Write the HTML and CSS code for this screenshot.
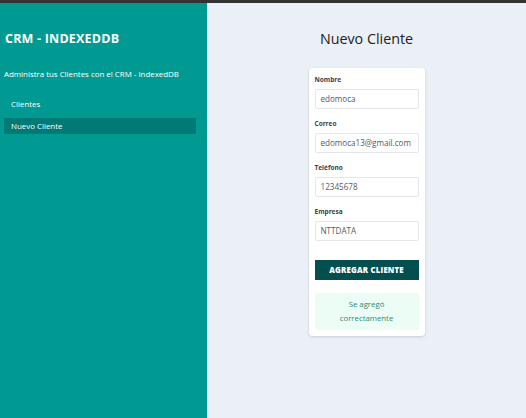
FILE: index.html
```html
<!DOCTYPE html>
<html lang="es">
<head>
<meta charset="utf-8">
<title>CRM - IndexedDB</title>
<link rel="stylesheet" href="styles.css">
</head>
<body>
<div class="topbar"></div>
<div class="layout">
  <aside class="sidebar">
    <h1 class="brand">CRM - INDEXEDDB</h1>
    <p class="tagline">Administra tus Clientes con el CRM - IndexedDB</p>
    <nav class="nav">
      <a class="nav-item">Clientes</a>
      <a class="nav-item active">Nuevo Cliente</a>
    </nav>
  </aside>
  <main class="main">
    <h2 class="page-title">Nuevo Cliente</h2>
    <form class="card">
      <div class="field">
        <label class="label">Nombre</label>
        <div class="input">edomoca</div>
      </div>
      <div class="field">
        <label class="label">Correo</label>
        <div class="input">edomoca13@gmail.com</div>
      </div>
      <div class="field">
        <label class="label">Teléfono</label>
        <div class="input">12345678</div>
      </div>
      <div class="field">
        <label class="label">Empresa</label>
        <div class="input">NTTDATA</div>
      </div>
      <button class="btn" type="button">AGREGAR CLIENTE</button>
      <div class="alert">Se agregó<br>correctamente</div>
    </form>
  </main>
</div>
</body>
</html>
```

FILE: styles.css
```css
* { box-sizing: border-box; }
html, body { margin: 0; padding: 0; height: 100%; }
body {
  font-family: "Open Sans", "Noto Sans", sans-serif;
  background: #ebf0f7;
  overflow: hidden;
}
.topbar { height: 3px; background: #333333; }
.layout { display: flex; height: 415px; }
.sidebar {
  width: 207px;
  flex: none;
  background: #009a92;
  color: #ffffff;
  padding: 0 11px 0 4px;
}
.brand {
  margin: 27px 0 0 1px;
  font-size: 12.5px;
  font-weight: 700;
  letter-spacing: 0.2px;
  line-height: 18px;
}
.tagline {
  margin: 21px 0 0 0;
  font-size: 7.9px;
  line-height: 11px;
}
.nav { margin-top: 16px; display: flex; flex-direction: column; }
.nav-item {
  display: block;
  font-size: 7.9px;
  line-height: 16px;
  padding: 0 7px;
  height: 16px;
  margin-bottom: 6px;
  color: #ffffff;
}
.nav-item.active { background: #007a74; }
.main {
  flex: 1;
  display: flex;
  flex-direction: column;
  align-items: center;
}
.page-title {
  margin: 25px 0 0 0;
  font-size: 14.3px;
  font-weight: 400;
  line-height: 21px;
  color: #222222;
}
.card {
  margin-top: 19px;
  width: 116px;
  background: #ffffff;
  border-radius: 4px;
  box-shadow: 0 1px 3px rgba(0,0,0,0.15);
  padding: 6px 6px 6px 6px;
}
.field { margin-bottom: 10px; }
.label {
  display: block;
  font-size: 6.5px;
  font-weight: 700;
  color: #3a3f4a;
  line-height: 9px;
  margin-bottom: 5px;
  margin-top: 1px;
}
.field + .field .label { margin-top: 0; }
.input {
  height: 20px;
  border: 1px solid #e3e6ea;
  border-radius: 2px;
  font-size: 8.1px;
  line-height: 18px;
  padding: 0 5px;
  color: #555a61;
  white-space: nowrap;
  overflow: hidden;
}
.btn {
  display: block;
  width: 100%;
  margin-top: 19px;
  height: 20px;
  border: none;
  background: #034f4f;
  color: #ffffff;
  font-family: inherit;
  font-size: 7.8px;
  font-weight: 800;
  letter-spacing: 0.2px;
  padding: 0;
}
.alert {
  margin-top: 13px;
  background: #ecfdf5;
  color: #2f8a72;
  font-size: 7.8px;
  line-height: 14px;
  text-align: center;
  padding: 4px 0 5px;
  border-radius: 2px;
}
```
